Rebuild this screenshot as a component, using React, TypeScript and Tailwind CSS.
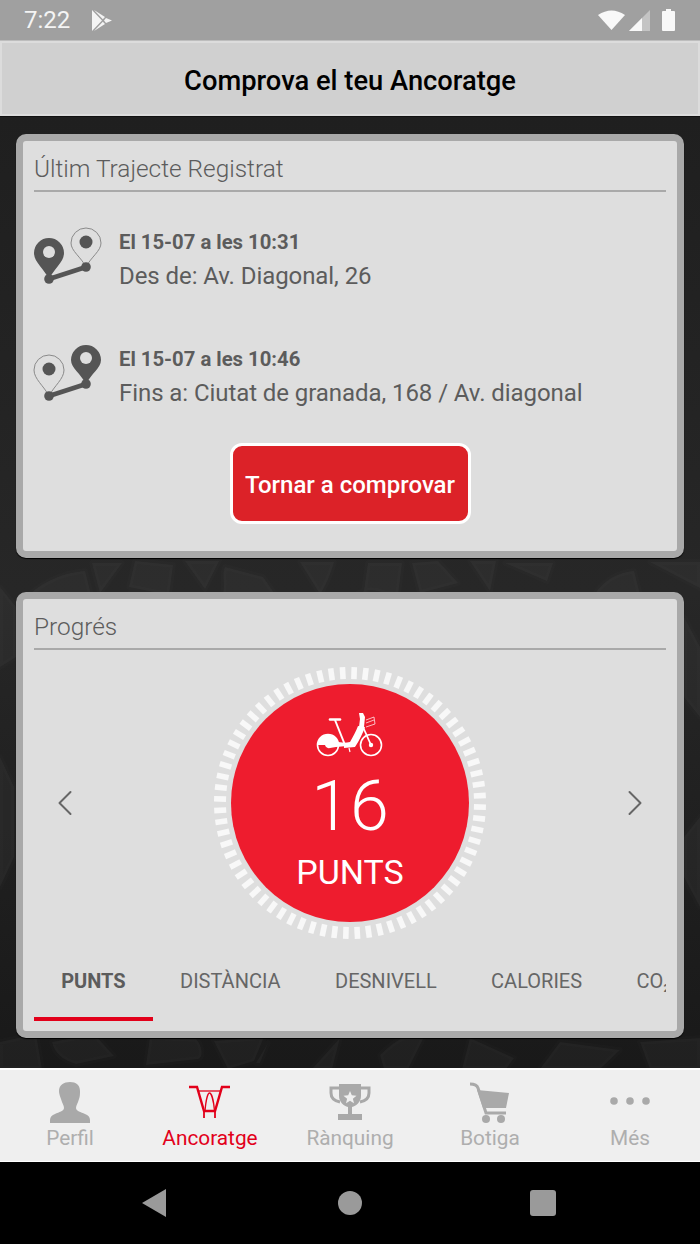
import React from 'react';
import { ChevronLeft, ChevronRight } from 'lucide-react';

const ticks = Array.from({ length: 72 }, (_, i) => i * 5 + 1.8);

const PinPair = ({ flip }: { flip?: boolean }) => (
  <svg width="70" height="58" viewBox="0 0 70 58" className="shrink-0 -mt-[3px]">
    {!flip ? (
      <>
        <path d="M1 26a15 15 0 0 1 30 0c0 9-10 16-15 26-5-10-15-17-15-26z" fill="#555" />
        <circle cx="16" cy="25" r="6" fill="#dedede" />
        <path d="M38 16a15 15 0 0 1 30 0c0 8-10 14-15 24-5-10-15-16-15-24z" fill="none" stroke="#8a8a8a" strokeWidth="1" />
        <circle cx="53" cy="15" r="6.5" fill="#555" />
      </>
    ) : (
      <>
        <path d="M1 26a15 15 0 0 1 30 0c0 9-10 16-15 26-5-10-15-17-15-26z" fill="none" stroke="#8a8a8a" strokeWidth="1" />
        <circle cx="16" cy="25" r="6.5" fill="#555" />
        <path d="M38 16a15 15 0 0 1 30 0c0 8-10 14-15 24-5-10-15-16-15-24z" fill="#555" />
        <circle cx="53" cy="14" r="6" fill="#dedede" />
      </>
    )}
    <path d="M16 52L53 40" stroke="#555" strokeWidth="4.5" />
    <circle cx="16" cy="52" r="4.8" fill="#555" />
    <circle cx="53" cy="40" r="4.8" fill="#555" />
  </svg>
);

const BikeIcon = () => (
  <svg width="68" height="46" viewBox="0 0 68 46">
    <circle cx="12" cy="33" r="10.5" fill="none" stroke="#fff" strokeWidth="1.6" />
    <path d="M1.500 33a10.500 10.500 0 0 1 20.500-3l9 1v3l-11 1-6 1a4 4 0 0 1-5-3z" fill="#fff" />
    <circle cx="55" cy="33" r="10.500" fill="none" stroke="#fff" strokeWidth="1.6" />
    <circle cx="55" cy="33" r="2.200" fill="#fff" />
    <path d="M19 8L29 33" fill="none" stroke="#fff" strokeWidth="2" />
    <path d="M14 7.500h10" stroke="#fff" strokeWidth="2.600" strokeLinecap="round" />
    <path d="M28 31l6-1c3-5 6-11 8-16l7 1c-2 6-6 14-10 20l-11 1z" fill="#fff" />
    <path d="M43 1h4l2 4-1 10h-5l1-8z" fill="#fff" />
    <path d="M47 15l8 18" stroke="#fff" strokeWidth="1.800" />
    <path d="M50 8l8-3 1 7-9 3M50 11l8-3" fill="none" stroke="#fff" strokeWidth="0.700" />
    <path d="M33 36l1 4" stroke="#fff" strokeWidth="1.200" />
  </svg>
);

const tabs = ['PUNTS', 'DISTÀNCIA', 'DESNIVELL', 'CALORIES'];

const Card = ({ title, className, children }: { title: string; className: string; children: React.ReactNode }) => (
  <section className={`relative mx-4 border-[7px] border-[#a9a9a9] rounded-[10px] bg-[#dedede] shadow-[0_1px_1px_#000] ${className}`}>
    <div className="mx-[11px] h-[51px] border-b-2 border-[#a9a9a9] flex items-center text-[24.4px] leading-[28px] text-[#5c5c5c] font-light pt-[6px]">
      {title}
    </div>
    {children}
  </section>
);

const TripRow = ({ flip, date, place, className }: { flip?: boolean; date: string; place: string; className: string }) => (
  <div className={`flex items-start gap-[16px] ml-[10px] h-[60px] ${className}`}>
    <PinPair flip={flip} />
    <div className="text-[#5c5c5c]">
      <div className="text-[20.3px] leading-[24px] font-bold">{date}</div>
      <div className="text-[24px] leading-[28px] mt-[8px] tracking-[-0.07px]">{place}</div>
    </div>
  </div>
);

const NavItem = ({ label, active, children }: { label: string; active?: boolean; children: React.ReactNode }) => (
  <div className="flex-1 flex flex-col items-center">
    <div className="h-[46px] flex items-center justify-center mt-[9px]">{children}</div>
    <span className={`text-[20.8px] leading-[24px] mt-[1px] ${active ? 'text-[#e2001a]' : 'text-[#aeaeae]'}`}>{label}</span>
  </div>
);

export default function App() {
  return (
    <div className="w-[700px] h-[1244px] flex flex-col overflow-hidden bg-black font-['Roboto',sans-serif]">
      <div className="h-[41px] bg-[#a0a0a0] border-b border-[#bdbdbd] flex items-center pl-6 pr-[25px] text-white">
        <span className="text-[24px] leading-none text-[#f4f4f4]">7:22</span>
        <svg width="20" height="21" viewBox="0 0 20 21" className="ml-[22px]">
          <path d="M0 0l10 10.500L0 21zM2 0l11 7-2.200 2.200zM2 21l11-7-2.200-2.200zM14 8l6 2.500-6 2.500-2-2.500z" fill="#f4f4f4" />
        </svg>
        <div className="ml-auto flex items-center">
          <svg width="27" height="20" viewBox="0 0 27 20" className="mr-[4px]">
            <path d="M0 5Q13.500-4 27 5L13.500 20z" fill="#f8f8f8" />
          </svg>
          <svg width="21" height="21" viewBox="0 0 21 21" className="mr-[12px]">
            <path d="M21 0V21H0z" fill="#c4c4c4" />
            <path d="M13 8V21H0z" fill="#f8f8f8" />
          </svg>
          <svg width="13" height="22" viewBox="0 0 13 22">
            <path d="M4 0h5v2h3a1 1 0 0 1 1 1v18a1 1 0 0 1-1 1H1a1 1 0 0 1-1-1V3a1 1 0 0 1 1-1h3z" fill="#f8f8f8" />
          </svg>
        </div>
      </div>

      <header className="h-[75px] bg-[#d0d0d0] border-2 border-[#dcdcdc] flex items-center justify-center pt-[5px] text-[27.3px] font-medium text-black">
        Comprova el teu Ancoratge
      </header>

      <main className="relative h-[952px] bg-gradient-to-b from-[#1f1f1f] via-[#272727] to-[#191919] pt-[17px] flex flex-col gap-[34px] overflow-hidden border-t border-[#111]">
        <svg className="absolute inset-0" width="700" height="952" viewBox="0 0 700 952">
          <g fill="#ffffff" fillOpacity="0.03" stroke="#ffffff" strokeOpacity="0.01" strokeLinejoin="round" strokeWidth="6">
            <path d="M20 486c20-20 40-30 65-32l8 32zM92 446h30l-22 30zM135 444l38 4-4 30-40-8zM185 444l20 28 14-28zM225 450c-4 10 2 16-4 36h60l-18-26zM300 445l20 32c6-8 12-24 14-32zM368 446l-4 28 34 4 4-32zM412 446l8 30 38-10-20-22zM470 444l20 30 6-30zM505 446l42 18 6-18zM590 486c6-14 20-30 44-32l8 32zM650 445l50 26v-26zM130 476l60 4v6h-64zM355 478c14-8 30-6 40 8h-50z" />
            <path d="M0 925l36-8 6 35H0zM52 925c2 10 10 18 24 22l38-8-20-22zM150 920l-4 28 52-6c6-2 4-14-2-20zM214 924l50-4-10 24-26 8zM268 926l-8 20h-4zM340 921l-8 31h-20zM380 938c8-8 16-14 24-18h20l-16 32h-24zM470 921l44 20-8 11h-44zM560 925l60 8-20 19h-60zM640 925l60-4v31h-50z" />
            <path d="M0 470l16 20v50l-16 10zM0 640l14 30v70l-14 30zM684 500l16 30v70l-16-20zM684 720l16-20v90l-16-30z" />
          </g>
        </svg>
        <Card title="Últim Trajecte Registrat" className="h-[424px]">
          <TripRow date="El 15-07 a les 10:31" place="Des de: Av. Diagonal, 26" className="mt-[38px]" />
          <TripRow flip date="El 15-07 a les 10:46" place="Fins a: Ciutat de granada, 168 / Av. diagonal" className="mt-[57px]" />
          <div className="flex justify-center mt-[36px]">
            <button className="w-[241px] h-[81px] rounded-[12px] border-[3px] border-white bg-[#dc2228] text-white text-[24px] font-medium pt-[2px]">
              Tornar a comprovar
            </button>
          </div>
        </Card>

        <Card title="Progrés" className="h-[446px]">
          <div className="flex items-center justify-between h-[292px] mt-[7px] px-[20px] text-[#666]">
            <ChevronLeft size={44} strokeWidth={1.1} />
            <div className="relative w-[274px] h-[274px] flex items-center justify-center">
              <svg className="absolute inset-0" width="274" height="274" viewBox="-137 -137 274 274">
                {ticks.map(a => (
                  <rect key={a} x="124" y="-2.800" width="12" height="5.600" fill="#f8f8f8" transform={`rotate(${a})`} />
                ))}
              </svg>
              <div className="relative w-[238px] h-[238px] rounded-full bg-[#ee1c2e] flex flex-col items-center text-white pt-[28px]">
                <BikeIcon />
                <div className="text-[70px] leading-[74px] font-[350] mt-[11px]">16</div>
                <div className="text-[34px] leading-[40px] font-normal mt-[9px]">PUNTS</div>
              </div>
            </div>
            <ChevronRight size={44} strokeWidth={1.1} />
          </div>
          <div className="mx-[11px] flex overflow-hidden h-[72px]">
            {tabs.map((t, i) => (
              <div
                key={t}
                className={`shrink-0 h-[72px] px-[27.2px] flex items-center text-[20px] pb-[4px] border-b-4 ${i === 0 ? 'font-bold text-[#5c5c5c] border-[#e2001a]' : 'text-[#666] border-transparent'}`}
              >
                {t}
              </div>
            ))}
            <div className="shrink-0 h-[72px] pl-[27.2px] flex items-center text-[20px] pb-[8px] text-[#666]">
              CO₂
            </div>
          </div>
        </Card>
      </main>

      <nav className="h-[94px] bg-[#efefef] border-t-2 border-b border-white flex">
        <NavItem label="Perfil">
          <svg width="40" height="41" viewBox="0 0 40 41" fill="#a9a9a9">
            <path d="M20 0c6 0 10 3 10 9 0 3 0 5-1 8-1 4-3 6-3 9 0 3 5 4 9 6 3 1 5 3 5 6v3H0v-3c0-3 2-5 5-6 4-2 9-3 9-6 0-3-2-5-3-9-1-3-2-5-2-8 0-6 5-9 11-9z" />
          </svg>
        </NavItem>
        <NavItem label="Ancoratge" active>
          <svg width="44" height="34" viewBox="0 0 44 34" fill="none" stroke="#e2001a">
            <path d="M1 2h8l7 24h11l7-24h8" strokeWidth="2.400" />
            <path d="M10 6h23" strokeWidth="1.300" />
            <path d="M17 26C18 14 20 8 21.500 8s4 6 5 18" strokeWidth="1.300" />
            <path d="M16 26v7M27 26v7" strokeWidth="1.800" />
          </svg>
        </NavItem>
        <NavItem label="Rànquing">
          <svg width="42" height="36" viewBox="0 0 42 36" fill="#a9a9a9">
            <path d="M10 4H2v5c0 5 4 8 9 9M32 4h8v5c0 5-4 8-9 9" fill="none" stroke="#a9a9a9" strokeWidth="3" />
            <path d="M10 0h22v12c0 6-5 10-9 11v7h-4v-7c-4-1-9-5-9-11zM9 30h24v6H9z" />
            <path d="M21 7l1.800 4.300 4.700.4-3.600 3 1.100 4.600-4-2.500-4 2.500 1.100-4.600-3.600-3 4.700-.4z" fill="#efefef" />
          </svg>
        </NavItem>
        <NavItem label="Botiga">
          <svg width="40" height="41" viewBox="0 0 40 41">
            <path d="M0 2c5 0 7 1 8 4l8 25h20" fill="none" stroke="#a9a9a9" strokeWidth="3" />
            <path d="M7 8l32 3-3 15H13z" fill="#a9a9a9" />
            <circle cx="16" cy="37" r="4" fill="#a9a9a9" />
            <circle cx="31" cy="37" r="4" fill="#a9a9a9" />
          </svg>
        </NavItem>
        <NavItem label="Més">
          <svg width="40" height="8" viewBox="0 0 40 8" fill="#a9a9a9" className="mb-[2px]">
            <circle cx="4" cy="4" r="3.800" />
            <circle cx="20" cy="4" r="3.800" />
            <circle cx="36" cy="4" r="3.800" />
          </svg>
        </NavItem>
      </nav>

      <div className="h-[82px] bg-black flex items-center pl-[142px]">
        <svg width="24" height="28" viewBox="0 0 24 28">
          <path d="M24 0v28L0 14z" fill="#9a9a9a" />
        </svg>
        <div className="ml-[172px] w-[24px] h-[24px] rounded-full bg-[#9a9a9a]" />
        <div className="ml-[168px] w-[26px] h-[26px] rounded-[3px] bg-[#9a9a9a]" />
      </div>
    </div>
  );
}
